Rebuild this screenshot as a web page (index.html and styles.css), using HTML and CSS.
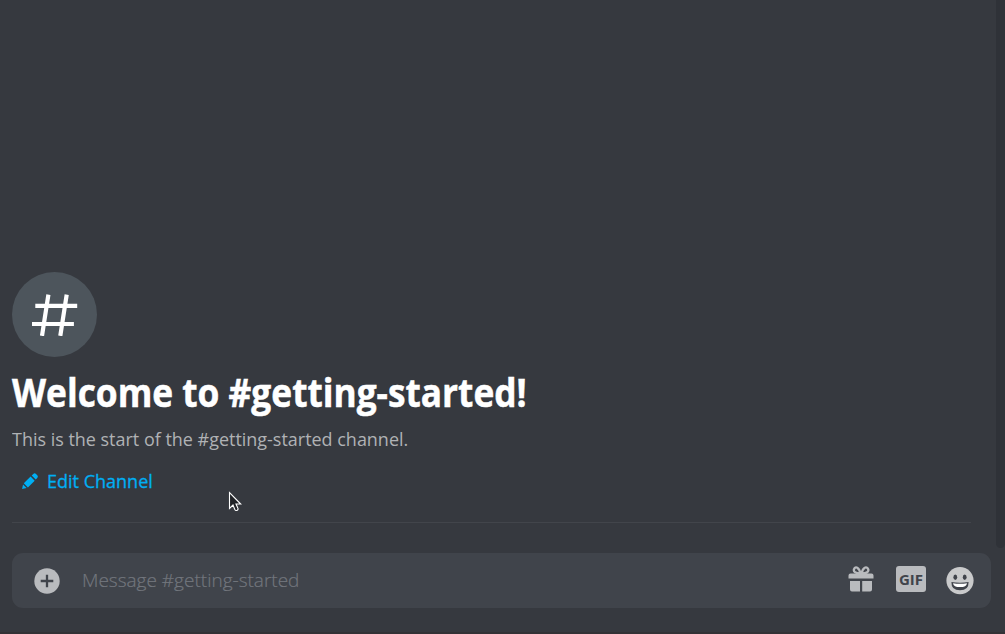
FILE: index.html
```html
<!DOCTYPE html>
<html lang="en">
<head>
<meta charset="utf-8">
<title>#getting-started</title>
<link rel="stylesheet" href="styles.css">
</head>
<body>
<main class="chat">
  <div class="scroller">
    <section class="welcome">
      <div class="channel-icon">
        <svg width="46" height="42" viewBox="0 0 46 42" fill="none" stroke="#fff" stroke-width="4.2"><path d="M16.400 .6 10 41.900M34.700 .6 28.300 41.900M3.300 11.800H45L45.200 11.800M0 30H41.900"/></svg>
      </div>
      <h1 class="title"><span>Welcome to #getting-started!</span></h1>
      <p class="intro"><span>This is the start of the #getting-started channel.</span></p>
      <a class="edit">
        <svg width="18" height="18" viewBox="0 0 18 18" fill="#00aff4"><path d="M1.100 17 2 12.500 5.600 16zM2.800 11.300 9.600 4.600 13.700 8.700 6.900 15.400zM10.700 3.500 12.300 1.900q1.400-1.200 2.700 0l1.300 1.300q1.200 1.400 0 2.700l-1.600 1.700z"/></svg>
        <span>Edit Channel</span>
      </a>
    </section>
    <div class="scrollbar"></div>
  </div>
  <form class="composer">
    <svg class="plus" width="26" height="26" viewBox="0 0 26 26"><circle cx="13" cy="13" r="12.7" fill="#b9bbbe"/><path d="M13 6.7v12.6M6.7 13h12.6" stroke="#40444b" stroke-width="2.3"/></svg>
    <span class="placeholder"><span>Message #getting-started</span></span>
    <svg class="gift" width="26" height="26" viewBox="0 0 26 26" fill="#b9bbbe"><path d="M2.500 7.500h21A2 2 0 0 1 25.500 9.500v3H.5v-3a2 2 0 0 1 2-2zM2 15h10v10.500H4a2 2 0 0 1-2-2zM14.200 15H24v8.500a2 2 0 0 1-2 2h-7.800z"/><path d="M12.500 7.500C7 7.500 5.300 5.500 6 3.200 7.500-.2 11 1 12.500 7.500zM13.500 7.500C19 7.500 21 5.500 20.200 3.200 18.500-.2 15 1 13.500 7.500z" fill="none" stroke="#b9bbbe" stroke-width="2.300"/></svg>
    <span class="gif"><span>GIF</span></span>
    <svg class="emoji" width="28" height="28" viewBox="0 0 28 28"><circle cx="14" cy="13.600" r="13.600" fill="#c9cacb"/><g fill="#40444b"><ellipse cx="9.300" cy="10.200" rx="1.900" ry="2.700"/><ellipse cx="18.700" cy="10.200" rx="1.900" ry="2.700"/><path d="M5.400 14.900q8.600 1.600 17.200 0 .2 8.400-8.600 8.400t-8.600-8.400z"/></g><path d="M7 16.200q7 1.300 14 0-.5 3.900-7 3.900T7 16.200z" fill="#fff"/></svg>
  </form>
  <svg class="cursor" width="14" height="21" viewBox="0 0 14 21"><path d="M1.500 1.500v16l3.500-3.500 1.700 4.200q1 2 2.600 1 1.200-.9.500-2.300L8 13h4.700z" fill="#202226" stroke="#fff" stroke-width="1.100"/></svg>
</main>
</body>
</html>
```
FILE: styles.css
```css
* { box-sizing: border-box; }
body {
  margin: 0;
  background: #36393f;
  font-family: "Open Sans", "Noto Sans", sans-serif;
  color: #fff;
}
.chat {
  position: relative;
  display: flex;
  flex-direction: column;
  height: 634px;
  overflow: hidden;
  border-bottom: 2px solid #333236;
}
.scroller { display: flex; height: 548px; }
.welcome {
  flex: 1;
  display: flex;
  flex-direction: column;
  align-items: flex-start;
  margin: 0 25px 25px 12px;
  padding-top: 272px;
  border-bottom: 1px solid #42454b;
}
.scrollbar { width: 9px; background: #2f3238; border-radius: 0 0 5px 5px; }
.channel-icon {
  display: flex;
  align-items: center;
  justify-content: center;
  width: 85px;
  height: 85px;
  border-radius: 50%;
  background: #4d555c;
}
.title, .intro { margin: 0; white-space: nowrap; }
.title span, .intro span, .edit span, .placeholder span {
  display: inline-block;
  transform-origin: 0 50%;
}
.title { margin-top: 10px; font-size: 38.500px; line-height: 50px; font-weight: 700; }
.title span { transform: scaleX(.916); -webkit-text-stroke: .5px #fff; }
.intro { margin-top: 9px; font-size: 19px; line-height: 26px; color: #b0b2b5; }
.intro span { transform: scaleX(.945); }
.edit {
  display: flex;
  align-items: center;
  gap: 8px;
  margin: 16px 0 0 9px;
  font-size: 19px;
  line-height: 26px;
  font-weight: 500;
  color: #00aff4;
}
.edit span { transform: scaleX(.948); -webkit-text-stroke: .3px #00aff4; }
.composer {
  display: flex;
  align-items: center;
  height: 55px;
  margin: 5px 14px 0 12px;
  padding: 0 17px 0 22px;
  border-radius: 11px;
  background: #40444b;
}
.placeholder {
  flex: 1;
  margin: -2px 0 0 22px;
  font-size: 19px;
  line-height: 26px;
  font-weight: 300;
  color: #72767d;
}
.placeholder span { -webkit-text-stroke: .2px #72767d; }
.gift { margin: -3px 22px 0 0; }
.gif {
  width: 30px;
  height: 26px;
  margin: -3px 20px 0 0;
  border-radius: 3px;
  background: #b9bbbe;
  color: #40444b;
  font-size: 15px;
  line-height: 26px;
  font-weight: 700;
  text-align: center;
}
.cursor { position: absolute; left: 228px; top: 491px; }
```
